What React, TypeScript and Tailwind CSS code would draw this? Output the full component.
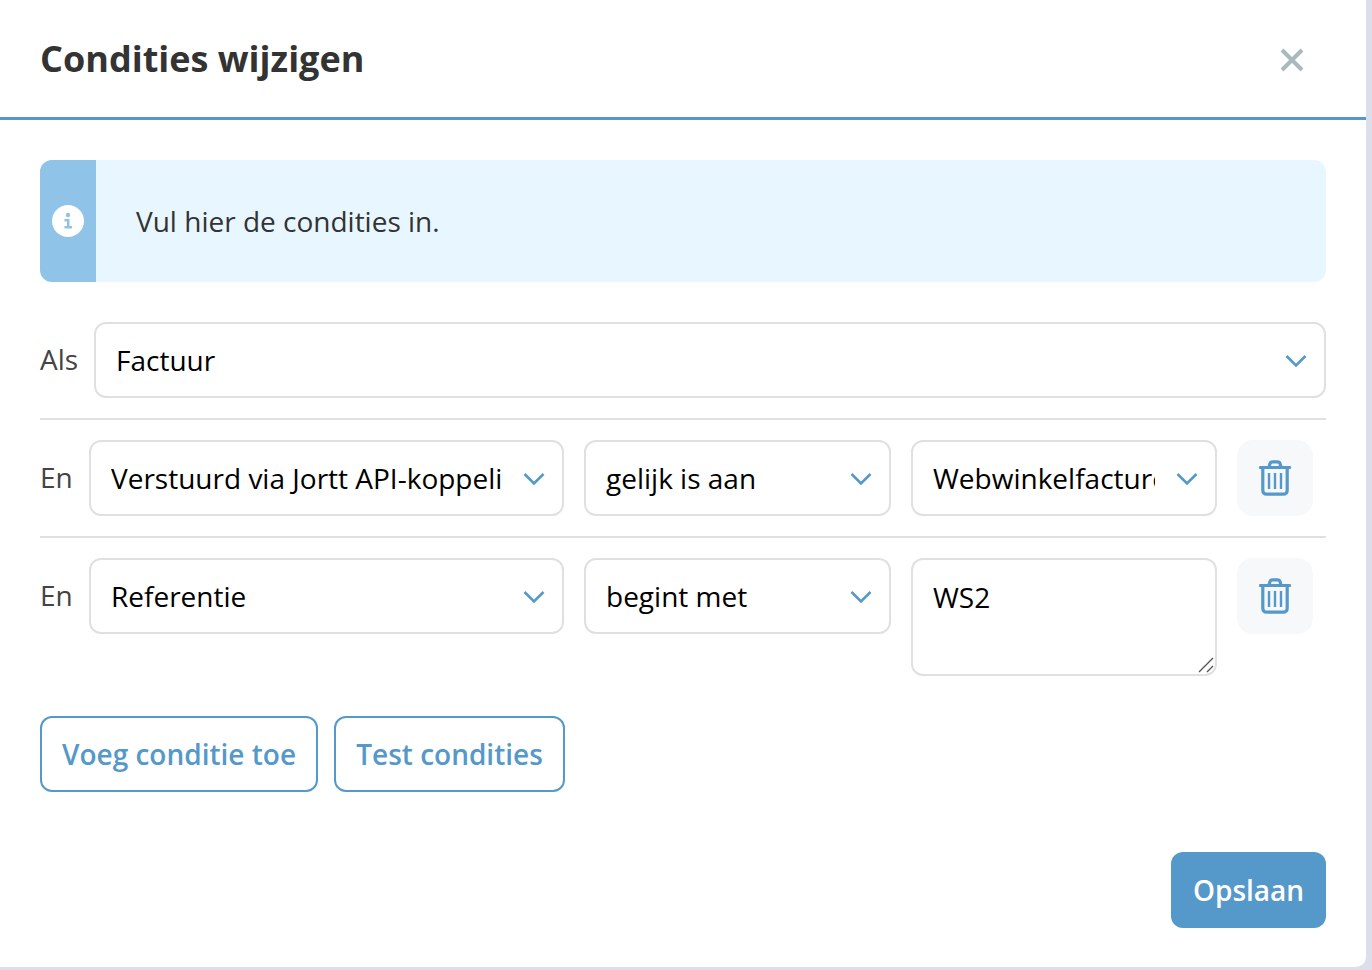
const font = "font-['Open_Sans',sans-serif]";

function Chevron() {
  return (
    <svg width="22" height="14" viewBox="0 0 22 14" fill="none" className="shrink-0 relative left-[1px] top-[1px]">
      <path d="M1.5 2 L11 11.5 L20.5 2" stroke="#5598ca" strokeWidth="2.6" />
    </svg>
  );
}

function Trash() {
  return (
    <svg width="32" height="36" viewBox="0 0 32 36" fill="none" stroke="#5598ca" strokeWidth="3.2">
      <path d="M1.5 7.5 H30.5" strokeLinecap="round" />
      <path d="M10 7 L11 3.5 Q11.5 1.8 13.5 1.8 H18.5 Q20.5 1.8 21 3.5 L22 7" />
      <path d="M3.8 8 V30 Q3.8 34.2 8 34.2 H24 Q28.2 34.2 28.2 30 V8" />
      <path d="M10 13 V29 M16 13 V29 M22 13 V29" strokeWidth="2.4" />
    </svg>
  );
}

function Select({ w, text, pr }: { w: string; text: string; pr: string }) {
  return (
    <div className={`${w} h-[76px] shrink-0 flex items-center pl-[20px] pr-[18px] bg-white border-2 border-[#e0e0e0] rounded-[12px]`}>
      <div className={`flex-1 min-w-0 overflow-hidden whitespace-nowrap text-[28px] text-black ${pr}`}>{text}</div>
      <Chevron />
    </div>
  );
}

function DeleteButton() {
  return (
    <div className="w-[76px] h-[76px] shrink-0 ml-5 flex items-center justify-center rounded-[16px] bg-[#f6f8fa]">
      <Trash />
    </div>
  );
}

export default function App() {
  return (
    <div className={`${font} w-[1372px] h-[970px] bg-[#dcdfe9] overflow-hidden`}>
      <div className="w-[1366px] h-[967px] bg-white rounded-br-[10px] flex flex-col">
        <div className="h-[120px] shrink-0 border-b-[3px] border-[#5598ca] pl-10 pr-[62px] flex items-center justify-between">
          <h1 className="text-[36px] leading-none font-bold text-[#333333]">Condities wijzigen</h1>
          <svg width="24" height="24" viewBox="0 0 24 24" fill="none" className="relative top-[1px]">
            <path d="M2 2 L22 22 M22 2 L2 22" stroke="#a9b9c0" strokeWidth="4" />
          </svg>
        </div>

        <div className="flex-1 flex flex-col px-10 pt-10 pb-[39px]">
          <div className="h-[122px] flex rounded-[12px] overflow-hidden bg-[#e8f7ff]">
            <div className="w-14 shrink-0 bg-[#8fc3e8] flex items-center justify-center">
              <svg width="32" height="32" viewBox="0 0 32 32">
                <circle cx="16" cy="16" r="16" fill="#ffffff" />
                <circle cx="16" cy="10" r="2.2" fill="#8fc3e8" />
                <path d="M12.5 14 H17.5 V21 H20 V23.5 H12.5 V21 H15 V16.5 H12.5 Z" fill="#8fc3e8" />
              </svg>
            </div>
            <div className="flex items-center pl-10 text-[28px] text-[#333333]">Vul hier de condities in.</div>
          </div>

          <div className="mt-10 flex items-start border-b-2 border-[#e0e0e0] pb-5">
            <div className="w-[54px] shrink-0 h-[76px] flex items-center pb-[2px] text-[28px] text-[#444444]">Als</div>
            <Select w="w-[1232px]" text="Factuur" pr="" />
          </div>

          <div className="mt-5 flex items-start border-b-2 border-[#e0e0e0] pb-5">
            <div className="w-[49px] shrink-0 h-[76px] flex items-center pb-[2px] text-[28px] text-[#444444]">En</div>
            <Select w="w-[475px]" text="Verstuurd via Jortt API-koppeling" pr="mr-5" />
            <div className="w-5 shrink-0" />
            <Select w="w-[307px]" text="gelijk is aan" pr="mr-5" />
            <div className="w-5 shrink-0" />
            <Select w="w-[306px]" text="Webwinkelfacturen" pr="mr-5" />
            <DeleteButton />
          </div>

          <div className="mt-5 flex items-start">
            <div className="w-[49px] shrink-0 h-[76px] flex items-center pb-[2px] text-[28px] text-[#444444]">En</div>
            <Select w="w-[475px]" text="Referentie" pr="mr-5" />
            <div className="w-5 shrink-0" />
            <Select w="w-[307px]" text="begint met" pr="mr-5" />
            <div className="w-5 shrink-0" />
            <div className="relative w-[306px] h-[118px] shrink-0 bg-white border-2 border-[#e0e0e0] rounded-[12px] pl-[20px] pt-[18px] text-[28px] leading-[38px] text-black">
              WS2
              <svg width="16" height="16" viewBox="0 0 16 16" className="absolute right-[1px] bottom-[1px]" fill="none" stroke="#555555" strokeWidth="1.4">
                <path d="M1 15 L15 1 M9 15 L15 9" />
              </svg>
            </div>
            <DeleteButton />
          </div>

          <div className="mt-10 flex gap-4">
            <div className="h-[76px] w-[278px] flex items-center justify-center border-2 border-[#5598ca] rounded-[12px] text-[28px] font-semibold text-[#5598ca]">Voeg conditie toe</div>
            <div className="h-[76px] w-[231px] flex items-center justify-center border-2 border-[#5598ca] rounded-[12px] text-[28px] font-semibold text-[#5598ca]">Test condities</div>
          </div>

          <div className="mt-[60px] flex justify-end">
            <div className="h-[76px] w-[155px] flex items-center justify-center rounded-[12px] bg-[#5598ca] text-[28px] font-semibold text-white">Opslaan</div>
          </div>
        </div>
      </div>
    </div>
  );
}
